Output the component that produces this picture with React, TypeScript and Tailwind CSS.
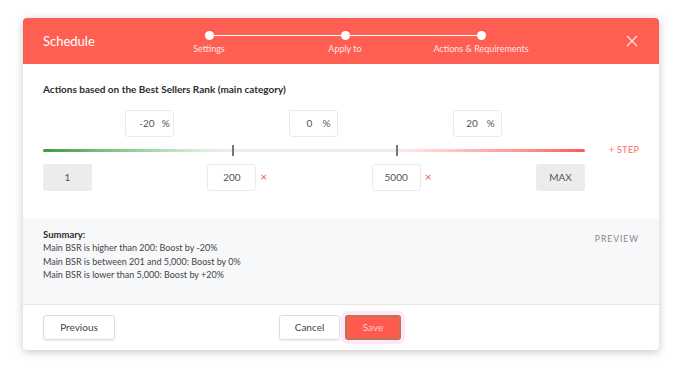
import React from "react";

const font = { fontFamily: "Lato, 'Noto Sans', sans-serif" };

function Box({ children, gray = false }: { children: React.ReactNode; gray?: boolean }) {
  return (
    <div
      className={`w-[49px] h-[27px] shrink-0 rounded-[3px] flex items-center justify-center text-[10px] text-[#555] ${
        gray ? "bg-[#ececec]" : "bg-white border border-[#ebebeb]"
      }`}
    >
      {children}
    </div>
  );
}

function Pct({ value, gapL, gapR }: { value: string; gapL: string; gapR: string }) {
  return (
    <Box>
      <span className={gapL}>{value}</span>
      <span className={gapR}>%</span>
    </Box>
  );
}

function Threshold({ value }: { value: string }) {
  return (
    <div className="relative">
      <Box>{value}</Box>
      <span className="absolute left-[53px] top-[5px] text-[12px] leading-[16px] text-[#ff5a50]">×</span>
    </div>
  );
}

function Step({ label }: { label: string }) {
  return (
    <div className="w-[136px] flex flex-col items-center">
      <div className="w-[9px] h-[9px] rounded-full bg-white relative z-10" />
      <div className="mt-[3px] text-[9px] leading-[11px] text-[#ffe3e0] whitespace-nowrap">{label}</div>
    </div>
  );
}

export default function App() {
  return (
    <div className="w-[675px] h-[371px] bg-white overflow-hidden" style={font}>
      <div className="ml-[23px] mt-[18px] w-[636px] rounded-[4px] bg-white shadow-[0_2px_10px_rgba(0,0,0,0.22)] overflow-hidden">
        {/* Header */}
        <div className="h-[46px] bg-[#ff5f53] flex items-center pl-[20px] pr-[21px]">
          <div className="w-[98px] text-white text-[13px] mt-[1px]">Schedule</div>
          <div className="relative flex self-start mt-[13px]">
            <div className="absolute left-[68px] right-[68px] top-[4px] h-[1px] bg-white" />
            <Step label="Settings" />
            <Step label="Apply to" />
            <Step label="Actions & Requirements" />
          </div>
          <svg className="ml-auto" width="12" height="12" viewBox="0 0 12 12">
            <path d="M1 1L11 11M11 1L1 11" stroke="#ffe3e0" strokeWidth="1.3" />
          </svg>
        </div>

        {/* Body */}
        <div className="px-[20px] pt-[19px] pb-[27px]">
          <div className="text-[10px] leading-[12px] font-bold text-[#2d2d2d]">
            Actions based on the Best Sellers Rank (main category)
          </div>
          <div className="w-[542px] mt-[15px] flex flex-col">
            <div className="flex pl-[82px] gap-[115px]">
              <Pct value="-20" gapL="ml-[10px]" gapR="ml-[7px]" />
              <Pct value="0" gapL="ml-[10px]" gapR="ml-[10px]" />
              <Pct value="20" gapL="ml-[6px]" gapR="ml-[9px]" />
            </div>
            <div className="relative h-[11px] mt-[8px] flex items-center">
              <div className="w-full h-[3px] rounded-full bg-[linear-gradient(to_right,#3a9b45_0%,#7cc383_12%,#dcefdc_30%,#eeeeee_36%,#eeeeee_64%,#fde3e3_68%,#ff8d8d_90%,#ff5757_100%)]" />
              <div className="absolute left-[189px] top-0 w-[1.5px] h-[11px] bg-[#777]" />
              <div className="absolute left-[353px] top-0 w-[1.5px] h-[11px] bg-[#777]" />
              <div className="absolute left-[566px] top-[-1px] whitespace-nowrap text-[9px] leading-[12px] text-[#ff6b5f] tracking-[0.3px]">
                + STEP
              </div>
            </div>
            <div className="flex justify-between mt-[8px]">
              <Box gray>1</Box>
              <Threshold value="200" />
              <Threshold value="5000" />
              <Box gray>MAX</Box>
            </div>
          </div>
        </div>

        {/* Summary */}
        <div className="bg-[#f7f8fa] border-b border-[#e6e6e6] h-[87px] px-[20px] pt-[10px] flex justify-between">
          <div className="text-[9px] leading-[13.4px] text-[#444]">
            <div className="font-bold text-[#2d2d2d] text-[9.5px]">Summary:</div>
            <div>Main BSR is higher than 200: Boost by -20%</div>
            <div>Main BSR is between 201 and 5,000: Boost by 0%</div>
            <div>Main BSR is lower than 5,000: Boost by +20%</div>
          </div>
          <div className="text-[8.5px] tracking-[1px] text-[#888] mt-[5px]">PREVIEW</div>
        </div>

        {/* Footer */}
        <div className="h-[45px] px-[20px] grid grid-cols-[1fr_auto_1fr] items-center">
          <div className="w-[72px] h-[25px] rounded-[3px] border border-[#ddd] shadow-[0_1px_2px_rgba(0,0,0,0.08)] flex items-center justify-center text-[10px] text-[#444]">
            Previous
          </div>
          <div className="flex items-center gap-[5px] mr-[2px]">
            <div className="w-[61px] h-[25px] rounded-[3px] border border-[#ddd] shadow-[0_1px_2px_rgba(0,0,0,0.08)] flex items-center justify-center text-[10px] text-[#444]">
              Cancel
            </div>
            <div className="w-[56px] h-[25px] rounded-[3px] border-[2px] border-[#b47a50] bg-[#ff5a4d] shadow-[0_0_0_4px_#ffe6fb] flex items-center justify-center text-[10px] text-[#ffc9d0]">
              Save
            </div>
          </div>
          <div />
        </div>
      </div>
    </div>
  );
}
